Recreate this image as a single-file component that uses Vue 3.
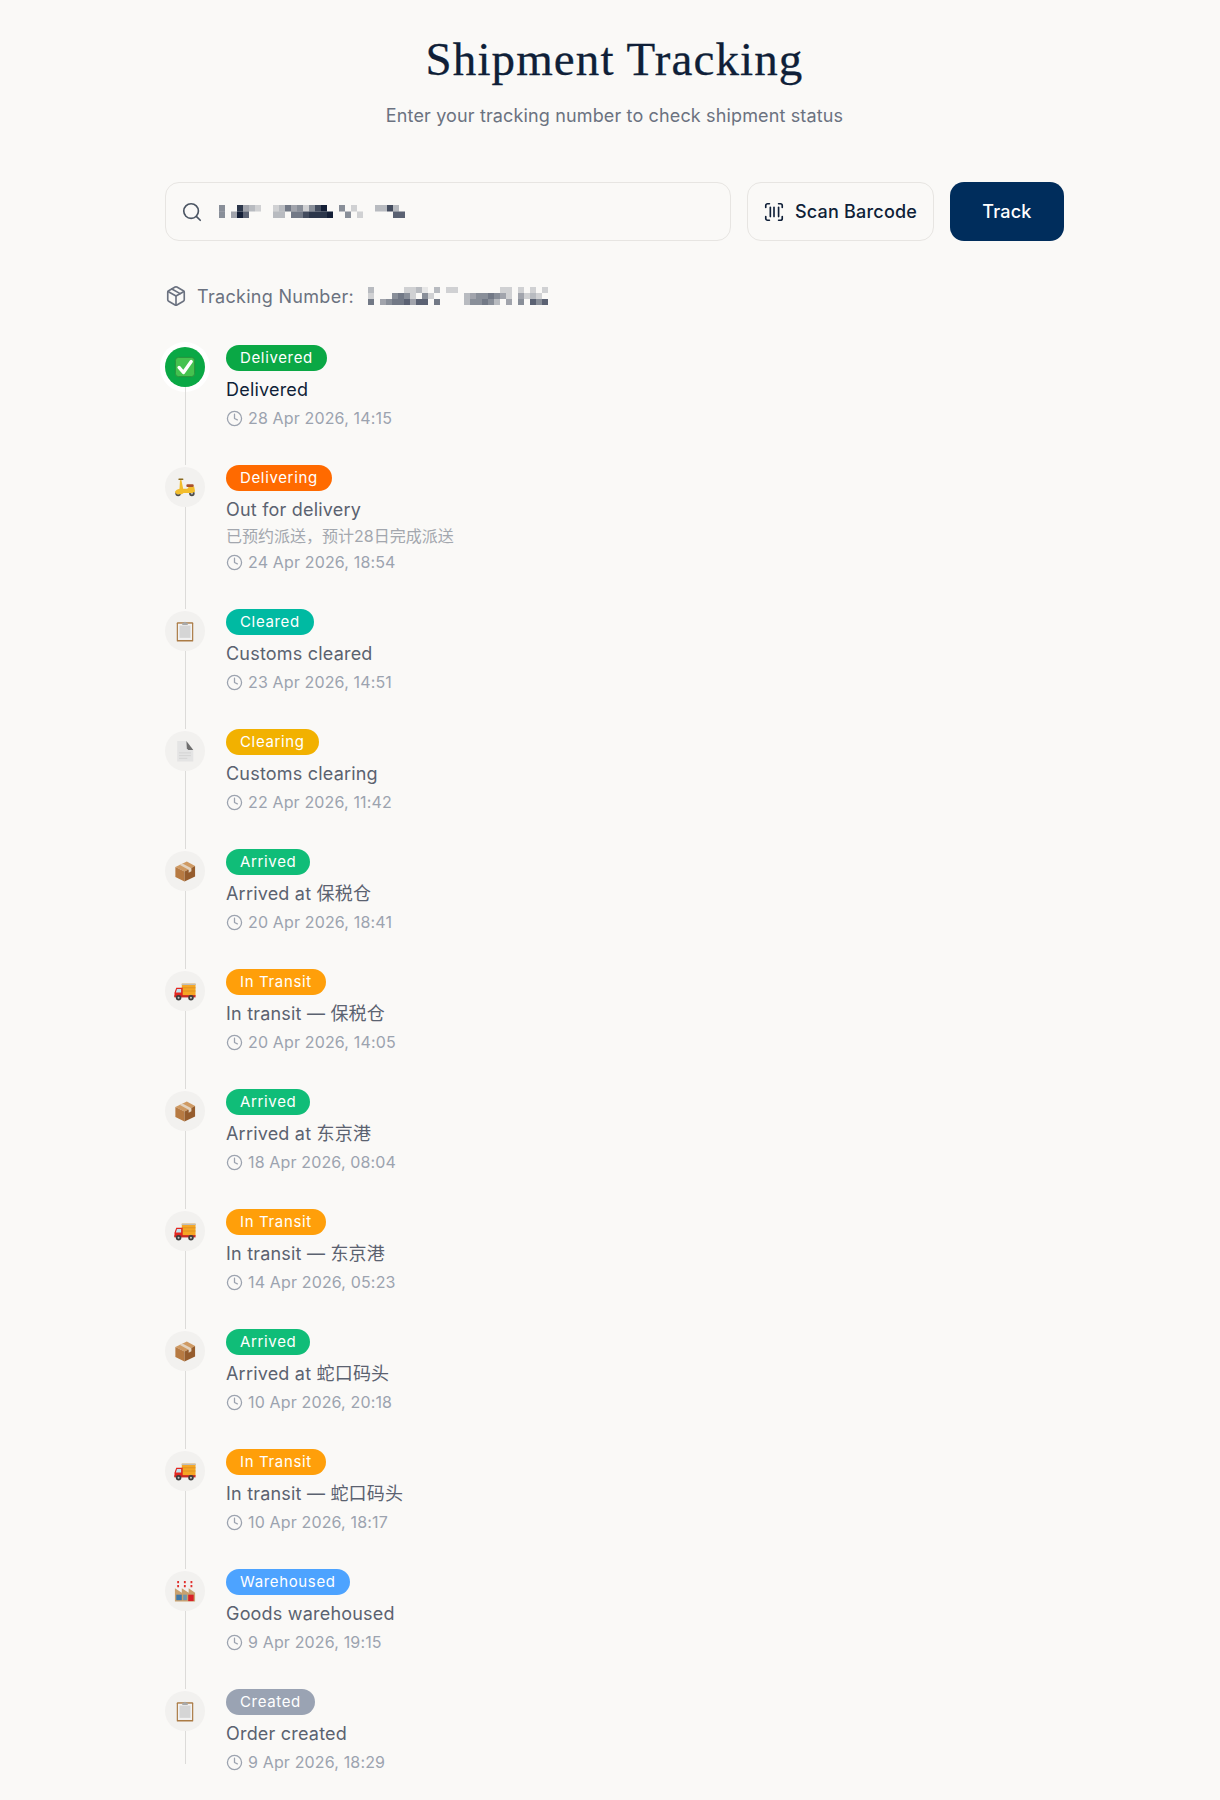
<template>
  <main class="page">
    <svg class="defs" aria-hidden="true">
      <symbol id="check" viewBox="0 0 24 24">
        <rect x="1.500" y="1.500" width="21" height="21" rx="3.500" fill="#45c24f" stroke="#2a8f3c" />
        <path d="M5.500 12.500l4.800 5.500L18.800 6" fill="none" stroke="#fff" stroke-width="3.600" stroke-linecap="round" stroke-linejoin="round" />
      </symbol>
      <symbol id="scooter" viewBox="0 0 24 24">
        <circle cx="4.500" cy="19" r="3" fill="#4a4a4a" />
        <circle cx="19.500" cy="19" r="3" fill="#4a4a4a" />
        <circle cx="4.500" cy="19" r="1.200" fill="#bbb" />
        <circle cx="19.500" cy="19" r="1.200" fill="#bbb" />
        <path d="M8 4l2 10h4.500l2-2.500h5.500l1 5.500-3 1.500H10.500l-2 1.500H3l-2-2.500c1-2 3-3 5-3.500L6.500 5z" fill="#f2bd2c" />
        <rect x="13.500" y="9" width="8" height="3" rx="1.200" fill="#a9512c" />
        <path d="M5.500 3.500h4" stroke="#8a6a1e" stroke-width="1.600" stroke-linecap="round" />
      </symbol>
      <symbol id="clipboard" viewBox="0 0 24 24">
        <rect x="3" y="2.500" width="18" height="21" rx="1" fill="#ab7b45" />
        <rect x="4.300" y="4" width="15.400" height="17.800" fill="#f2f2f2" />
        <rect x="6" y="6" width="12" height="13.500" fill="#d5d5d5" />
        <path d="M9 3h2a1 1 0 0 1 2 0h2v2.500H9z" fill="#a8a8a8" />
      </symbol>
      <symbol id="page" viewBox="0 0 24 24">
        <path d="M3.500 1h10l7.500 10v12.500H3.500z" fill="#e4e4e4" />
        <path d="M13.500 1l7.500 10h-5.500L14 9z" fill="#6f6f6f" />
        <path d="M5.500 14h13M5.500 17h13M5.500 20h9" stroke="#d2d2d2" stroke-width="1" />
      </symbol>
      <symbol id="box" viewBox="0 0 24 24">
        <path d="M1.500 7.500L14 1.500l9 5-11.500 6z" fill="#cf9a63" />
        <path d="M1.500 7.500l10 5V23.500l-10-5z" fill="#b77a42" />
        <path d="M11.500 12.500L23 6.500v11.500l-11.500 5.500z" fill="#955c2d" />
        <path d="M6 5.300l10 5.400v3.300l3-1.600V9L9.200 3.800z" fill="#e3d3c0" />
      </symbol>
      <symbol id="truck" viewBox="0 0 24 24">
        <path d="M8.500 4h15v13.500H8.500z" fill="#f5a623" />
        <path d="M8.500 4h15v1.500H8.500z" fill="#bdbdbd" />
        <path d="M8.500 8.500h15M8.500 12h15" stroke="#d98c22" stroke-width=".8" />
        <path d="M0.500 14l2-5.500h7v10H0.500z" fill="#e3261f" />
        <path d="M3.300 9.800h4.500v3.700H2z" fill="#bfe4f2" />
        <rect x="0.500" y="16.500" width="23" height="2.500" fill="#c92a22" />
        <circle cx="5" cy="19.300" r="3" fill="#3d3d3d" />
        <circle cx="18.500" cy="19.300" r="3" fill="#3d3d3d" />
        <circle cx="5" cy="19.300" r="1.100" fill="#c9c9c9" />
        <circle cx="18.500" cy="19.300" r="1.100" fill="#c9c9c9" />
      </symbol>
      <symbol id="factory" viewBox="0 0 24 24">
        <path d="M3.500 1h2v9h-2zM10.800 1h2v9h-2zM18 1h2v9h-2z" fill="#f2f2f2" />
        <path d="M3.500 1h2v2.500h-2zM3.500 5.500h2v2.500h-2zM10.800 1h2v2.500h-2zM10.800 5.500h2v2.500h-2zM18 1h2v2.500h-2zM18 5.500h2v2.500h-2z" fill="#e0302c" />
        <path d="M1 23.500V9l7.500 5V9l7.500 5V9l7 5v9.500z" fill="#c9a16f" />
        <rect x="2.500" y="16" width="6" height="6" fill="#3f78a8" />
        <rect x="10" y="16" width="4" height="6" fill="#6f97ad" />
        <rect x="15.500" y="16" width="6" height="7" fill="#d92027" />
      </symbol>
    </svg>

    <header class="head">
      <h1>Shipment Tracking</h1>
      <p>Enter your tracking number to check shipment status</p>
    </header>

    <section class="search">
      <div class="field">
        <svg class="ico-search" viewBox="0 0 24 24">
          <circle cx="11" cy="11" r="8" />
          <path d="m21 21-4.300-4.300" />
        </svg>
        <svg class="mosaic" :width="31 * 6" height="13">
          <rect v-for="c in inputCells" :key="c.k" :x="c.x * 6" :y="c.y * 6.5" width="6" height="6.5" :fill="c.fill" />
        </svg>
      </div>
      <button class="scan">
        <svg class="ico-scan" viewBox="0 0 24 24">
          <path d="M3 7V5a2 2 0 0 1 2-2h2" />
          <path d="M17 3h2a2 2 0 0 1 2 2v2" />
          <path d="M21 17v2a2 2 0 0 1-2 2h-2" />
          <path d="M7 21H5a2 2 0 0 1-2-2v-2" />
          <path d="M8 7v10" />
          <path d="M12 7v10" />
          <path d="M17 7v10" />
        </svg>
        Scan Barcode
      </button>
      <button class="track">Track</button>
    </section>

    <div class="number">
      <svg class="ico-pkg" viewBox="0 0 24 24">
        <path d="M11 21.730a2 2 0 0 0 2 0l7-4A2 2 0 0 0 21 16V8a2 2 0 0 0-1-1.730l-7-4a2 2 0 0 0-2 0l-7 4A2 2 0 0 0 3 8v8a2 2 0 0 0 1 1.730z" />
        <path d="M12 22V12" />
        <polyline points="3.290 7 12 12 20.710 7" />
        <path d="m7.500 4.270 9 5.150" />
      </svg>
      <span>Tracking Number:</span>
      <svg class="mosaic serial" :width="30 * 6" height="18">
        <rect v-for="c in numberCells" :key="c.k" :x="c.x * 6" :y="c.y * 6" width="6" height="6" :fill="c.fill" />
      </svg>
    </div>

    <ol class="timeline">
      <li v-for="(e, i) in events" :key="i" class="event" :class="{ latest: i === 0 }">
        <div class="rail">
          <div class="dot">
            <svg class="emoji" viewBox="0 0 24 24"><use :href="`#${e.icon}`" /></svg>
          </div>
          <div class="line"></div>
        </div>
        <div class="body">
          <span class="badge" :style="{ background: e.color }">{{ e.badge }}</span>
          <div class="title">{{ e.title }}</div>
          <div v-if="e.note" class="note">{{ e.note }}</div>
          <div class="date">
            <svg class="ico-clock" viewBox="0 0 24 24">
              <circle cx="12" cy="12" r="10" />
              <polyline points="12 6 12 12 16 14" />
            </svg>
            {{ e.date }}
          </div>
        </div>
      </li>
    </ol>
  </main>
</template>

<script setup>
const cells = rows => {
  const out = []
  rows.forEach((row, y) => {
    row.split('').forEach((d, x) => {
      if (d !== '.') out.push({ k: `${x}-${y}`, x, y, fill: `rgba(15,27,51,${Number(d) / 10 + 0.08})` })
    })
  })
  return out
}

const inputCells = cells([
  '4..8321..125341479..4.1...2272.1',
  '4.396....22.5578889..4.1.....6672'
])

const numberCells = cells([
  '2.....1120.2.11.......11.1.1.1',
  '1...4541.41.....23445431.3121.3',
  '5.34556366.5....244542.3.4.646'
])

const c = {
  arrived: '#10bd78',
  transit: '#ff9f0a'
}

const events = [
  { icon: 'check', badge: 'Delivered', color: '#0aa845', title: 'Delivered', date: '28 Apr 2026, 14:15' },
  { icon: 'scooter', badge: 'Delivering', color: '#ff6a00', title: 'Out for delivery', note: '已预约派送，预计28日完成派送', date: '24 Apr 2026, 18:54' },
  { icon: 'clipboard', badge: 'Cleared', color: '#00baa2', title: 'Customs cleared', date: '23 Apr 2026, 14:51' },
  { icon: 'page', badge: 'Clearing', color: '#f2b100', title: 'Customs clearing', date: '22 Apr 2026, 11:42' },
  { icon: 'box', badge: 'Arrived', color: c.arrived, title: 'Arrived at 保税仓', date: '20 Apr 2026, 18:41' },
  { icon: 'truck', badge: 'In Transit', color: c.transit, title: 'In transit — 保税仓', date: '20 Apr 2026, 14:05' },
  { icon: 'box', badge: 'Arrived', color: c.arrived, title: 'Arrived at 东京港', date: '18 Apr 2026, 08:04' },
  { icon: 'truck', badge: 'In Transit', color: c.transit, title: 'In transit — 东京港', date: '14 Apr 2026, 05:23' },
  { icon: 'box', badge: 'Arrived', color: c.arrived, title: 'Arrived at 蛇口码头', date: '10 Apr 2026, 20:18' },
  { icon: 'truck', badge: 'In Transit', color: c.transit, title: 'In transit — 蛇口码头', date: '10 Apr 2026, 18:17' },
  { icon: 'factory', badge: 'Warehoused', color: '#4da3ff', title: 'Goods warehoused', date: '9 Apr 2026, 19:15' },
  { icon: 'clipboard', badge: 'Created', color: '#9aa3b3', title: 'Order created', date: '9 Apr 2026, 18:29' }
]
</script>

<style>
body {
  background-color: #faf9f7;
}
</style>

<style scoped>
* {
  box-sizing: border-box;
}
.page {
  width: 899px;
  margin-left: 165px;
  padding-top: 31px;
  font-family: Inter, "Noto Sans CJK SC", sans-serif;
  color: #0f1f38;
}
.defs {
  position: absolute;
  width: 0;
  height: 0;
}
.head {
  text-align: center;
}
h1 {
  margin: 0;
  font-family: "Liberation Serif", serif;
  font-size: 47px;
  line-height: 56px;
  font-weight: 400;
  letter-spacing: 1.1px;
  -webkit-text-stroke: 0.3px #0f1f38;
  color: #0f1f38;
}
.head p {
  margin: 16px 0 0;
  font-size: 18px;
  line-height: 26px;
  letter-spacing: 0.14px;
  color: #6b7280;
}
.search {
  display: flex;
  gap: 16px;
  margin-top: 53px;
  height: 59px;
}
.field {
  flex: 1;
  display: flex;
  align-items: center;
  gap: 16px;
  padding-left: 15px;
  border: 1px solid #e7e5e2;
  border-radius: 14px;
  background: #faf9f7;
}
.ico-search {
  width: 22px;
  height: 22px;
  fill: none;
  stroke: #4b5563;
  stroke-width: 1.800;
  stroke-linecap: round;
  stroke-linejoin: round;
}
.mosaic {
  display: block;
  flex: none;
}
.serial {
  margin-left: 4px;
}
button {
  font-family: inherit;
  font-size: 18px;
  font-weight: 500;
  letter-spacing: 0.2px;
  cursor: pointer;
  border-radius: 14px;
}
.scan {
  display: flex;
  align-items: center;
  gap: 10px;
  width: 187px;
  padding: 0 15px;
  background: #faf9f7;
  border: 1px solid #e7e5e2;
  color: #0f1f38;
  white-space: nowrap;
}
.ico-scan {
  width: 22px;
  height: 22px;
  flex: none;
  fill: none;
  stroke: #0f1f38;
  stroke-width: 1.800;
  stroke-linecap: round;
  stroke-linejoin: round;
}
.track {
  width: 114px;
  border: none;
  background: #002d5c;
  color: #fff;
}
.number {
  display: flex;
  align-items: center;
  gap: 10px;
  margin-top: 41px;
  height: 28px;
  font-size: 18px;
  font-weight: 400;
  letter-spacing: 0.3px;
  color: #6b7280;
}
.ico-pkg {
  width: 22px;
  height: 22px;
  fill: none;
  stroke: #6b7280;
  stroke-width: 1.800;
  stroke-linecap: round;
  stroke-linejoin: round;
}
.timeline {
  list-style: none;
  margin: 35px 0 0;
  padding: 0;
}
.event {
  display: flex;
  gap: 21px;
}
.rail {
  display: flex;
  flex-direction: column;
  align-items: center;
  width: 40px;
  flex: none;
  padding-top: 2px;
}
.dot {
  display: flex;
  align-items: center;
  justify-content: center;
  width: 40px;
  height: 40px;
  flex: none;
  border-radius: 50%;
  background: #f2f1ef;
}
.latest .dot {
  background: #0aa845;
  box-shadow: 0 0 0 5px #fff;
}
.emoji {
  width: 22px;
  height: 22px;
}
.line {
  flex: 1;
  width: 1px;
  background: #dcdbd9;
}
.event:last-child .line {
  margin-bottom: 10px;
}
.body {
  padding-bottom: 35px;
}
.event:last-child .body {
  padding-bottom: 0;
}
.badge {
  display: inline-block;
  height: 26px;
  padding: 0 14px;
  border-radius: 13px;
  font-size: 15px;
  line-height: 26px;
  font-weight: 400;
  letter-spacing: 0.65px;
  color: #fff;
  vertical-align: top;
}
.title {
  margin-top: 6px;
  font-size: 18px;
  line-height: 26px;
  letter-spacing: 0.2px;
  color: #5b6270;
}
.latest .title {
  color: #0f1f38;
}
.note {
  margin: 1px 0 -1px;
  font-size: 16px;
  line-height: 24px;
  color: #a3a7ae;
}
.date {
  display: flex;
  align-items: center;
  gap: 5px;
  margin-top: 3px;
  font-size: 16px;
  line-height: 24px;
  letter-spacing: 0.15px;
  color: #9ca3af;
}
.ico-clock {
  width: 17px;
  height: 17px;
  fill: none;
  stroke: #9ca3af;
  stroke-width: 1.800;
  stroke-linecap: round;
  stroke-linejoin: round;
}
</style>
